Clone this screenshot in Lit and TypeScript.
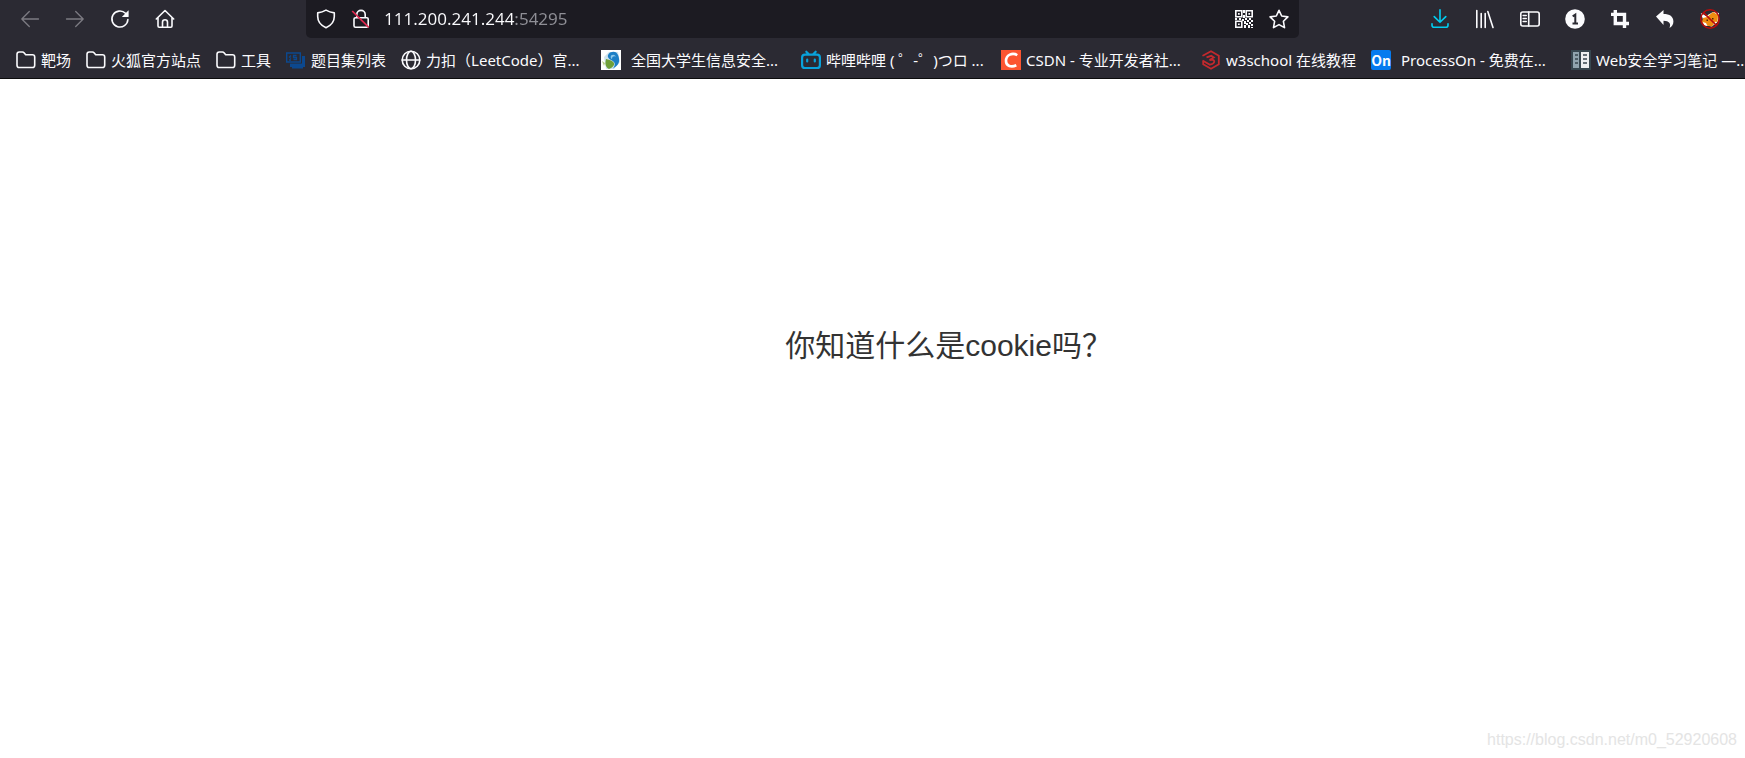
import { LitElement, html, css, svg, TemplateResult } from "lit";
import { customElement } from "lit/decorators.js";
import { classMap } from "lit/directives/class-map.js";

const icon = (body: TemplateResult, box = 20) =>
  html`<svg class="icon" viewBox="0 0 ${box} ${box}" aria-hidden="true">${body}</svg>`;

const back = icon(svg`<path class="line" d="M18.5 10H1.8M9.3 2.5 1.8 10l7.5 7.5"/>`);
const forward = icon(svg`<path class="line" d="M1.5 10h16.7M10.7 2.5l7.5 7.5-7.5 7.5"/>`);
const reload = icon(svg`
  <path class="line bold" d="M17.9 10.5a8 8 0 1 1-2.4-6.2"/>
  <path fill="currentColor" d="M18.6 1.2v6.2a.6.6 0 0 1-.6.6h-6.2z"/>`);
const home = icon(svg`
  <path class="line bold" d="M1.3 10 10 1.5l8.7 8.5M3 8.8v8.3q0 1.1 1.1 1.1h11.8q1.1 0 1.1-1.1V8.8M7.5 18v-4.8a2.5 2.5 0 0 1 5 0V18"/>`);
const shield = icon(svg`
  <path class="line bold" d="M10 1.1C7.6 2.5 5 3.4 1.7 3.9v3.6c0 5 3 8.800 8.300 11.200 5.300-2.400 8.300-6.200 8.300-11.200V3.900C15 3.400 12.400 2.500 10 1.100z"/>`);
const lock = icon(svg`
  <path class="line bold" d="M5.800 8.500V5.600a4.200 4.200 0 0 1 8.400 0v2.900M4.600 8.700h11.300q1.300 0 1.300 1.300v6.800q0 1.500-1.500 1.500H4.500Q3 18.300 3 16.800V10q0-1.300 1.600-1.300z"/>
  <path stroke="#e22850" stroke-width="1.700" d="M1.200 2 17.800 18.300"/>`);
const qr = icon(svg`
  <g fill="none" stroke="currentColor" stroke-width="1.600">
    <path d="M1.800 1.800h6v6h-6zM12.200 1.800h6v6h-6zM1.800 12.200h6v6h-6z"/></g>
  <path fill="currentColor" d="M4 4h1.700v1.700H4zM14.400 4h1.700v1.700h-1.700zM4 14.400h1.700v1.700H4zM1 9h2v2H1zM5 9h2v2H5zM9 1h2v3H9zM9 6h2v3H9zM8 10h2v2H8zM11 9h2v2h-2zM15 9h2v2h-2zM17 11h2v2h-2zM13 11h2v2h-2zM10 12h2v3h-2zM12 14h2v2h-2zM15 13h2v2h-2zM10 16h2v3h-2zM14 16h2v3h-2zM17 15h2v2h-2zM17 18h2v1h-2z"/>`);
const star = icon(svg`
  <path class="line bold" d="m10 1.300 2.700 5.700 6.200.9-4.500 4.400 1.100 6.300L10 15.600l-5.500 3 1.100-6.300L1.100 7.900l6.200-.9z"/>`);
const download = icon(svg`
  <path class="line bold" d="M10 .8v12.400M4.200 7.600l5.800 5.700 5.800-5.700"/>
  <path class="line bold" d="M2 14.700v1.500q0 2 2 2h12q2 0 2-2v-1.500"/>`);
const library = icon(svg`
  <path class="line bold" d="M1.800 1.500v17M6.200 4.500v14M10.200 4.500v14M12.800 2.500l5.200 16"/>`);
const sidebar = icon(svg`
  <rect class="line bold" x=".8" y="3" width="18.400" height="14" rx="2"/>
  <path class="line bold" d="M8.700 3v14M3.200 6.500h3M3.200 9.500h3M3.200 12.500h3"/>`);
const badge = icon(svg`
  <circle cx="10" cy="10" r="9.800" fill="currentColor"/>
  <path stroke="#2b2a33" stroke-width="2" fill="none" d="M7.700 7.300l2.600-1.700v9.100M7.500 14.500h5.500"/>`);
const crop = icon(svg`
  <path fill="none" stroke="currentColor" stroke-width="3.400" d="M1 5.400h13.500V19M5.300 1v13.500H19"/>`);
const undo = icon(svg`
  <path fill="currentColor" d="M1 7.600 8.500 1v4c6.200 0 9.900 2.500 9.900 7.400 0 2.700-1.300 4.900-3.900 6.600 1.800-4.700-.3-7-6-7.200v4.100z"/>`);
const fox = icon(svg`
  <path fill="#fff" d="M.8 4 6 7l7-4 6 1-1 8-6 5.500-7-1.500z"/>
  <path fill="#f08c10" d="M3 9 7 8l6-5 5 3-.5 7-6 4.500L4 16l-2-3z"/>
  <path fill="#fff" d="m2.500 13 3.500 1 1.500 3-3-.5zM13 14.500l3-2 1 1-3 2.500z"/>
  <path fill="#50210a" d="M6.500 10.500H8V12H6.500zM12 9h1.500v1.500H12z"/>
  <g fill="none" stroke="#b90b0b" stroke-width="1.500"><circle cx="10" cy="10" r="9.200"/><path d="m3.600 3.600 12.800 12.800"/></g>`);

const folder = icon(svg`
  <path class="line bold" d="M1 4.300Q1 2 3.200 2h3.300q.9 0 1.500.7l1.700 2h6.700q2.300 0 2.300 2.200v8.300q0 2.300-2.300 2.300H3.200Q1 17.500 1 15.200z"/>`);
const desks = icon(svg`
  <path fill="none" stroke="#0c488e" stroke-width="1.400" d="M.7 3h13.600v9H.7z"/>
  <path fill="#0c488e" d="M16 6h3v11h-2v1.500H6V17H4v-3.500h12z"/>
  <path fill="none" stroke="#0c488e" stroke-width="1.300" d="M5 5.500 3.500 7 5 8.500M10.500 5.500h-3v2h3v2h-3M3 10h2"/>`);
const globe = icon(svg`
  <g class="line bold"><circle cx="10" cy="10" r="8.800"/><ellipse cx="10" cy="10" rx="4.500" ry="8.800"/><path d="M1.200 10h17.600"/></g>`);
const leaf = icon(svg`
  <path fill="#fff" d="M0 0h20v20H0z"/>
  <path fill="#cfe4ee" d="M3 7 8 2l9 0 2 10-6 7H5z"/>
  <path fill="#1d7fc6" d="M9 2.500Q15 0 17 5c2 5 2 10-5 13.500 3-4 2-6-1-8C7 8.500 5 6 9 2.500z"/>
  <path fill="#8fc9ea" d="M10 5.500q3-2 5 1-4-1-4 2.500-2-1-1-3.500z"/>
  <path fill="#6fa03a" d="M5 9c5 1 9 3 8 6-1 2-3 3-5 4-4-2-4-6-3-10z"/>
  <path fill="#b7cf86" d="m1 11 3 2-1 3z"/>`);
const tv = icon(svg`
  <path fill="none" stroke="#09a2db" stroke-width="2.200" stroke-linecap="round" d="m5.300 1.700 2.500 2.500M14.700 1.700l-2.500 2.500M4 4.700h12q2.900 0 2.900 2.800v7.700q0 2.800-2.900 2.800H4q-2.900 0-2.900-2.800V7.500q0-2.800 2.900-2.800zM6.200 9.500v2M13.800 9.500v2"/>`);
const csdn = icon(svg`
  <path fill="#fc5531" d="M0 0h20v20H0z"/>
  <path fill="none" stroke="#fff" stroke-width="2.600" d="M16.300 5.200C11.500 2.300 5 4.700 5 11c0 5.300 5.500 6.500 10.300 4.300"/>`);
const w3 = icon(svg`
  <path fill="none" stroke="#c4292d" stroke-width="1.800" d="M2.200 6.300V5.500L10 1.300l7.800 4.400v8.600L10 18.700l-7.800-4.400v-3"/>
  <path fill="none" stroke="#c4292d" stroke-width="1.800" d="m5.500 7.300 4.800-1.500 2.500 1.700L8.500 10q4.500-.8 4.800 1.500-.3 2.500-4.300 3.200L1.500 10.500"/>`);
const book = icon(svg`
  <path fill="#37474f" d="M0 0h20v20H0z"/><path fill="#90a4ae" d="M2 2h6v16H2z"/><path fill="#eceff1" d="M10 2h8v16h-8z"/>
  <path stroke="#37474f" stroke-width="1.500" d="M4 5h3M4 9h3M4 13h3M12 5h4M12 9h4M12 13h4"/>`);
const on = html`<span class="icon tile">On</span>`;

interface Bookmark { label: string; icon: TemplateResult; capped?: boolean; spaced?: boolean; folder?: boolean }

const bookmarks: Bookmark[] = [
  { label: "靶场", icon: folder, folder: true },
  { label: "火狐官方站点", icon: folder, folder: true },
  { label: "工具", icon: folder, folder: true },
  { label: "题目集列表", icon: desks },
  { label: "力扣（LeetCode）官...", icon: globe, capped: true },
  { label: "全国大学生信息安全...", icon: leaf, capped: true, spaced: true },
  { label: "哔哩哔哩 ( ゜-゜)つロ ...", icon: tv, capped: true },
  { label: "CSDN - 专业开发者社...", icon: csdn, capped: true },
  { label: "w3school 在线教程", icon: w3 },
  { label: "ProcessOn - 免费在...", icon: on, capped: true, spaced: true },
  { label: "Web安全学习笔记 —...", icon: book, capped: true },
];

@customElement("app-root")
export class AppRoot extends LitElement {
  static styles = css`
    :host {
      display: flex;
      flex-direction: column;
      min-height: 100vh;
      background: #fff;
      font-family: "Noto Sans", "Noto Sans CJK SC", sans-serif;
    }
    * { box-sizing: border-box; }
    button, input { font: inherit; color: inherit; border: 0; padding: 0; background: none; }
    .icon { display: block; flex: none; width: 20px; height: 20px; }
    .line { fill: none; stroke: currentColor; stroke-width: 1.3; stroke-linejoin: round; stroke-linecap: round; }
    .bold { stroke-width: 1.6; }
    .chrome { background: #2b2a33; color: #fbfbfe; border-bottom: 1px solid #0c0c0d; overflow: hidden; }
    .toolbar { display: flex; height: 38px; padding: 0 13px 0 7px; }
    .group { display: flex; flex: none; }
    .tool { display: grid; place-items: center; width: 45px; height: 37px; }
    .tool:disabled { color: #7c7b82; }
    .active { color: #00cdf0; }
    .address {
      display: flex; align-items: center; flex: 1; gap: 15px;
      margin: 0 118px 0 119px; padding: 0 10px;
      background: #1c1b22; border-radius: 0 0 5px 5px;
    }
    .address button { height: 37px; }
    .url {
      flex: 1; min-width: 0; height: 36px; padding-bottom: 2px; margin-left: -2px;
      font-size: 17px; line-height: 24px; outline: none;
      color: transparent; background: linear-gradient(90deg, #fbfbfe 131px, #8f8f96 131px);
      -webkit-background-clip: text; background-clip: text;
    }
    .bookmarks { display: flex; gap: 15px; height: 40px; padding: 5px 0 1px 16px; }
    .bookmark {
      display: flex; flex: none; align-items: center; gap: 5px; color: inherit;
      font-size: 15px; line-height: 24px;
      text-decoration: none; white-space: nowrap;
    }
    .capped { width: 185px; }
    .spaced { gap: 10px; }
    .tile {
      display: grid; place-items: center; border-radius: 2px; background: #067bef;
      font: bold 14px/20px "Noto Sans CJK SC", sans-serif;
    }
    .page { display: flex; flex: 1; flex-direction: column; justify-content: space-between; }
    .question {
      margin: 246px 0 0 45%; color: #333; font: 400 30px/42px "Liberation Sans", "Noto Sans CJK SC", sans-serif;
    }
    .credit {
      align-self: flex-end; padding: 0 8px 8px; color: #e4e4e4; text-decoration: none;
      font: 16px/20px "Liberation Sans", sans-serif;
    }
  `;

  private tool(name: string, glyph: TemplateResult, active = false, disabled = false) {
    return html`<button class=${classMap({ tool: true, active })} aria-label=${name} ?disabled=${disabled}>${glyph}</button>`;
  }

  render() {
    return html`
      <header class="chrome">
        <div class="toolbar">
          <div class="group">
            ${this.tool("后退", back, false, true)}${this.tool("前进", forward, false, true)}
            ${this.tool("刷新", reload)}${this.tool("主页", home)}
          </div>
          <div class="address">
            <button aria-label="保护">${shield}</button>
            <button aria-label="不安全">${lock}</button>
            <input class="url" type="text" aria-label="地址" spellcheck="false" value="111.200.241.244:54295">
            <button aria-label="二维码">${qr}</button>
            <button aria-label="收藏">${star}</button>
          </div>
          <div class="group">
            ${this.tool("下载", download, true)}${this.tool("书库", library)}${this.tool("侧栏", sidebar)}
            ${this.tool("通知", badge)}${this.tool("截图", crop)}${this.tool("撤销", undo)}${this.tool("扩展", fox)}
          </div>
        </div>
        <nav class="bookmarks" aria-label="书签">
          ${bookmarks.map((b) => {
            const cls = classMap({ bookmark: true, capped: !!b.capped, spaced: !!b.spaced });
            return b.folder
              ? html`<button class=${cls}>${b.icon}<span>${b.label}</span></button>`
              : html`<a class=${cls} href="#">${b.icon}<span>${b.label}</span></a>`;
          })}
        </nav>
      </header>
      <main class="page">
        <h1 class="question">你知道什么是cookie吗？</h1>
        <a class="credit" href="#">https://blog.csdn.net/m0_52920608</a>
      </main>
    `;
  }
}
